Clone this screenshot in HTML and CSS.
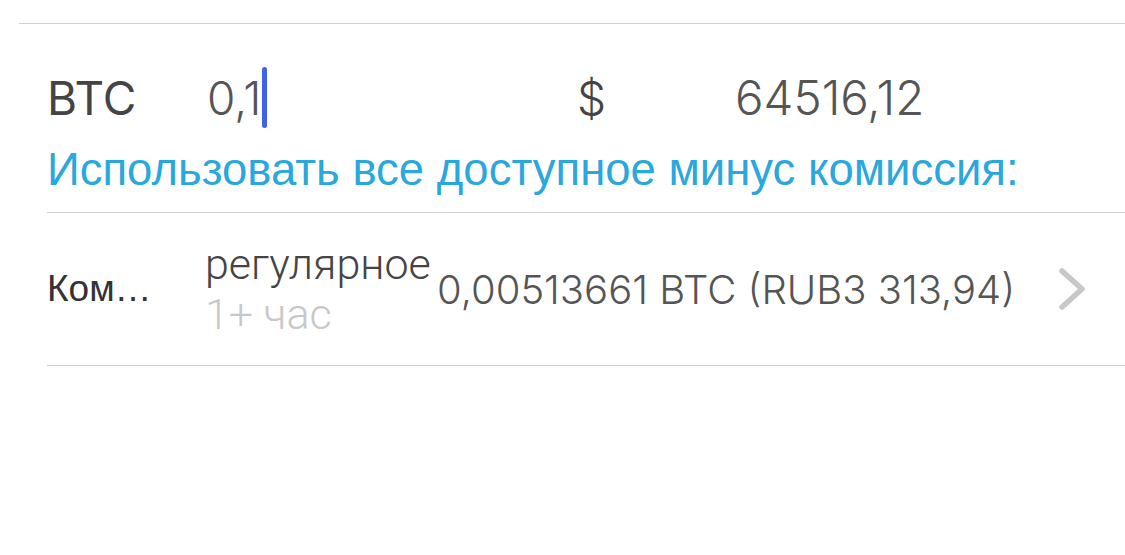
FILE: index.html
```html
<!DOCTYPE html>
<html lang="ru">
<head>
  <meta charset="UTF-8" />
  <meta name="viewport" content="width=device-width, initial-scale=1" />
  <title>Отправить BTC</title>
  <link rel="stylesheet" href="styles.css">
</head>
<body>

  <div class="top-line"></div>

  <div class="send">
    <div class="amount-row">
      <div class="currency">BTC</div>
      <div class="amount">0,1<span class="caret"></span></div>
      <div class="currency fiat">$</div>
      <div class="amount fiat-value">64516,12</div>
    </div>

    <div class="use-all">Использовать все доступное минус комиссия:</div>

    <div class="fee-row">
      <div class="fee-label">Ком…</div>
      <div class="fee-speed">
        <div class="speed-name">регулярное</div>
        <div class="speed-time">1+ час</div>
      </div>
      <div class="fee-value">0,00513661 BTC (RUB3 313,94)</div>
      <svg class="chevron" width="32" height="44" viewBox="0 0 32 44">
        <path d="M6 4 L26 22 L6 40" fill="none" stroke="#c7c7cc" stroke-width="5.5" stroke-linecap="round" stroke-linejoin="round" />
      </svg>
    </div>
  </div>

</body>
</html>
```

FILE: styles.css
```css
body {
  margin: 0;
  background: #fff;
  font-family: "Liberation Sans", Arial, sans-serif;
  color: #333;
}

.top-line {
  margin: 23px 0 0 19px;
  border-top: 1px solid #d0d0d0;
}

.send {
  margin-left: 47px;
}

.amount-row {
  display: grid;
  grid-template-columns: 160px 370px 158px auto;
  align-items: center;
  height: 99px;
  padding-top: 24px;
  font-family: "Inter", "Liberation Sans", sans-serif;
}

.currency {
  font-size: 46px;
  color: #444;
}

.fiat {
  font-weight: 300;
}

.amount {
  font-size: 46px;
  font-weight: 300;
  color: #555;
  display: flex;
  align-items: center;
}

.fiat-value {
  font-size: 47.5px;
}

.caret {
  display: inline-block;
  width: 5px;
  height: 61px;
  margin-left: 1px;
  border-radius: 3px;
  background: #3d64e6;
}

.use-all {
  font-size: 45.5px;
  line-height: 45px;
  height: 65px;
  color: #2aa7dd;
  white-space: nowrap;
}

.fee-row {
  display: grid;
  grid-template-columns: 158px 232px auto 1fr;
  align-items: center;
  height: 152px;
  border-top: 1px solid #d0d0d0;
  border-bottom: 1px solid #d0d0d0;
}

.fee-label {
  font-size: 37px;
  color: #333;
}

.fee-speed {
  font-family: "Roboto", "Liberation Sans", sans-serif;
  font-weight: 300;
  font-size: 43px;
  line-height: 50px;
  white-space: nowrap;
}

.speed-name {
  color: #444;
}

.speed-time {
  color: #c8c8c8;
}

.fee-value {
  font-family: "Inter", "Liberation Sans", sans-serif;
  font-weight: 300;
  font-size: 40px;
  color: #555;
  white-space: nowrap;
}

.chevron {
  justify-self: end;
  margin-right: 37px;
}
```
